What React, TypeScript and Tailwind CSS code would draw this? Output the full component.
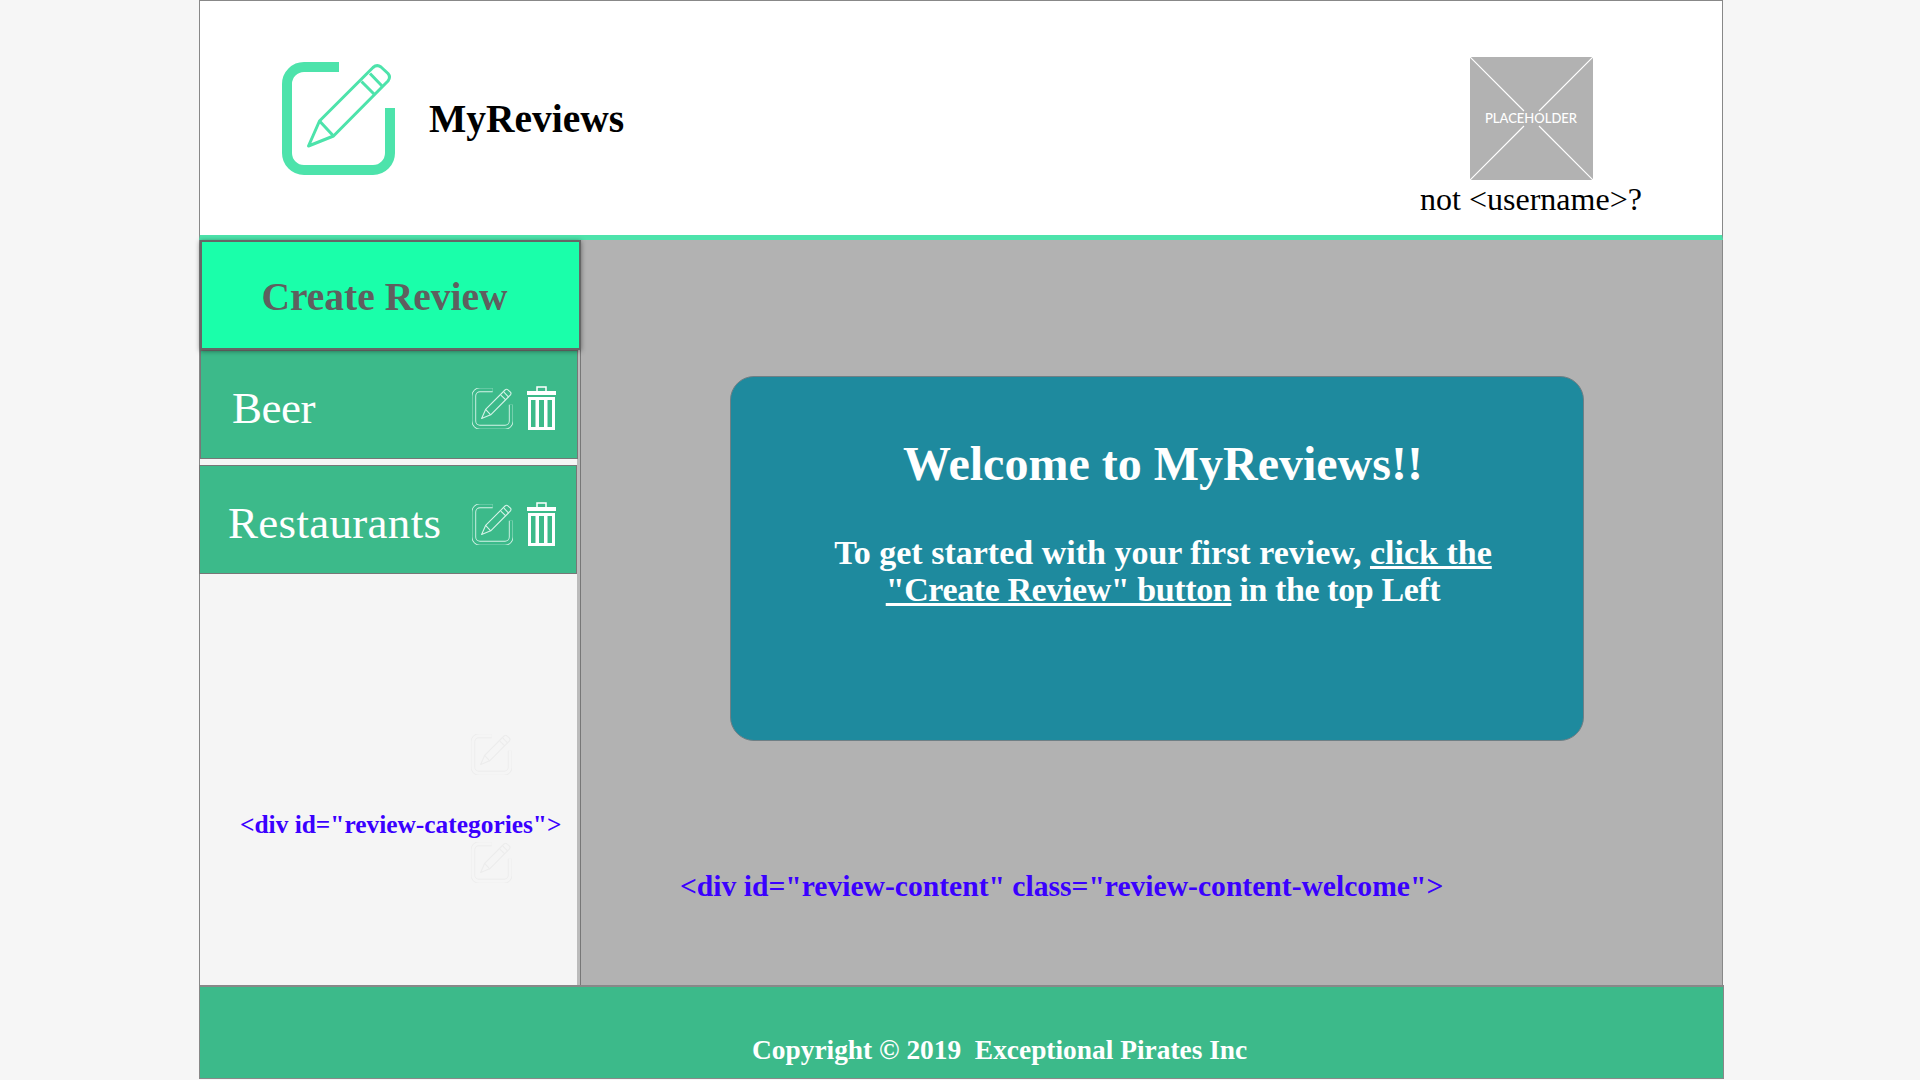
const serif = "font-['Liberation_Serif',serif]";

const BOX = "M57 5H22A17 17 0 0 0 5 22V91A17 17 0 0 0 22 108H91A17 17 0 0 0 108 91V46";
const PENCIL = "M26.5 84L37.5 59L91 5.5Q95 2 99 5L106 11.5Q109 15 106 19L51.5 74Z";
const BANDS = "M37.5 59L51.5 74M79.5 19.5L93 33M88 11.5L101 25";

function LogoIcon() {
  return (
    <svg width="113" height="113" viewBox="0 0 113 113" fill="none" stroke="#4de3ab" className="shrink-0">
      <path d={BOX} strokeWidth="10" />
      <path d={PENCIL} strokeWidth="3" strokeLinejoin="round" />
      <path d={BANDS} strokeWidth="3" />
    </svg>
  );
}

// outlined version of the logo, used in the rows
function EditIcon({ bg, line, className }: { bg: string; line: string; className?: string }) {
  return (
    <svg width="41" height="41" viewBox="0 0 113 113" fill="none" className={className}>
      <path d={BOX} stroke={line} strokeWidth="13" />
      <path d={BOX} stroke={bg} strokeWidth="8" />
      <path d={PENCIL} stroke={line} strokeWidth="3" fill={bg} strokeLinejoin="round" />
      <path d={BANDS} stroke={line} strokeWidth="3" />
    </svg>
  );
}

function TrashIcon() {
  return (
    <svg width="29" height="44" viewBox="0 0 29 44" className="shrink-0">
      <path d="M10 5V1H19V5" fill="none" stroke="#fff" strokeWidth="1.5" />
      <rect x="0" y="5" width="29" height="4" fill="#fff" />
      <path d="M1 11H28V44H1ZM4 14V41H8.5V14ZM12 14V41H17V14ZM20.5 14V41H25V14Z" fill="#fff" fillRule="evenodd" />
    </svg>
  );
}

function CategoryRow({ name, className, iconsClass }: { name: string; className: string; iconsClass: string }) {
  return (
    <div className={`flex items-center justify-between border border-[#777] bg-[#3cba8a] text-[45px] leading-none text-white ${className}`}>
      <span>{name}</span>
      <div className={`flex items-center gap-[14px] ${iconsClass}`}>
        <EditIcon bg="#3cba8a" line="#d6f3e8" />
        <TrashIcon />
      </div>
    </div>
  );
}

export default function App() {
  return (
    <div className={`h-[1080px] overflow-hidden bg-[#f6f6f6] ${serif}`}>
      <div className="ml-[199px] flex h-[1079px] w-[1525px] flex-col">
        <header className="flex h-[240px] w-[1524px] shrink-0 items-center justify-between border-x border-t border-b-[5px] border-x-[#888] border-t-[#888] border-b-[#4de3ab] bg-white">
          <div className="ml-[82px] flex items-center gap-[34px]">
            <LogoIcon />
            <h1 className="pt-[3px] text-[39.5px] leading-none font-bold text-black">MyReviews</h1>
          </div>
          <div className="mr-[80px] flex w-[222px] flex-col items-center pt-[38px]">
            <div className="relative flex h-[123px] w-[123px] items-center justify-center bg-[#b2b2b2]">
              <svg width="123" height="123" viewBox="0 0 123 123" className="absolute inset-0">
                <path d="M0 0L54 54M123 0L69 54M0 123L54 69M123 123L69 69" stroke="#fff" strokeWidth="1.2" />
              </svg>
              <span className="relative font-['Lato',sans-serif] text-[13px] leading-none font-medium text-white">PLACEHOLDER</span>
            </div>
            <p className="mt-[1px] text-[32px] leading-[36px] whitespace-nowrap text-black">not &lt;username&gt;?</p>
          </div>
        </header>

        <div className="flex min-h-0 flex-1 w-[1524px]">
          <aside className="relative flex w-[381px] shrink-0 flex-col border-r-[3px] border-r-[#bbb] border-l border-l-[#888] bg-[#f5f5f5] shadow-[1px_0_0_#777]">
            <button type="button" className="relative z-10 h-[110px] w-[381px] border-2 border-[#666] bg-[#1affaa] pt-[5px] pr-[12px] text-[39.5px] leading-none font-bold text-[#5f5f5f] shadow-[0_1px_5px_rgba(0,0,0,0.45)]">
              Create Review
            </button>
            <CategoryRow name="Beer" className="h-[109px] w-[378px] pt-[7px] pl-[31px] tracking-[-0.5px]" iconsClass="mr-[21px]" />
            <CategoryRow name="Restaurants" className="mt-[6px] -ml-px h-[109px] w-[378px] pt-[7px] pl-[28px] tracking-[0.3px]" iconsClass="mr-[20px] pt-[2px]" />
            <EditIcon bg="#f5f5f5" line="#ececec" className="mt-[160px] ml-[271px]" />
            <p className="mt-[34px] ml-[40px] text-[25.4px] leading-[30px] font-bold whitespace-nowrap text-[#3a00ff]">&lt;div id="review-categories"&gt;</p>
            <EditIcon bg="#f5f5f5" line="#ececec" className="mt-[3px] ml-[271px]" />
          </aside>

          <main className="min-w-0 flex-1 border-r border-r-[#888] bg-[#b2b2b2] pt-[136px] pl-[150px]">
            <section className="h-[365px] w-[854px] rounded-[24px] border border-[#6f7f85] bg-[#1e8a9e] pt-[45px] pl-[12px] text-center font-bold text-white">
              <h2 className="text-[48px] leading-[84px]">Welcome to MyReviews!!</h2>
              <p className="mt-[28px] text-[34px] leading-[37px]">
                To get started with your first review, <span className="underline">click the</span>
                <br />
                <span className="tracking-[-0.4px]">
                  <span className="underline">"Create Review" button</span> in the top Left
                </span>
              </p>
            </section>
            <p className="mt-[127px] -ml-[50px] text-[29.6px] leading-[36px] font-bold whitespace-nowrap text-[#3a00ff]">&lt;div id="review-content" class="review-content-welcome"&gt;</p>
          </main>
        </div>

        <footer className="h-[94px] shrink-0 border-t-2 border-b border-x border-[#888] border-x-[#888] bg-[#3cba8a] pt-[48px] pl-[552px] text-[27.4px] leading-[30px] font-bold text-white">
          Copyright © 2019&nbsp; Exceptional Pirates Inc
        </footer>
      </div>
    </div>
  );
}
